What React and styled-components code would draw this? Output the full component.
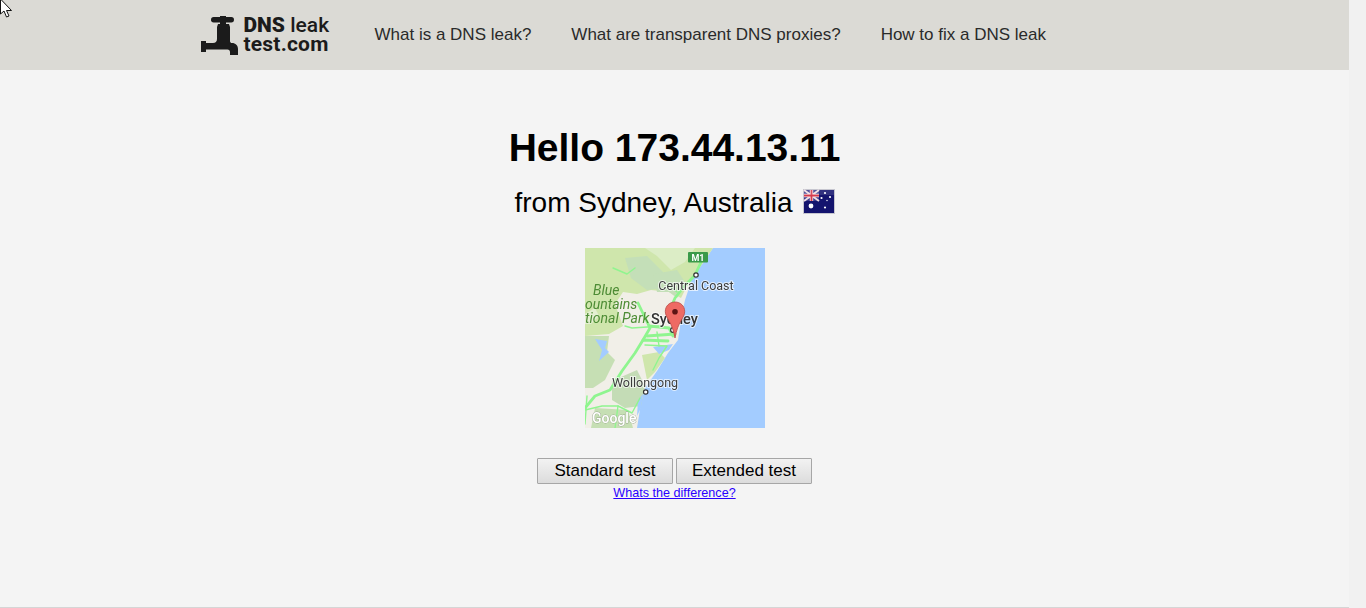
import React from "react";
import styled, { createGlobalStyle } from "styled-components";

const GlobalStyle = createGlobalStyle`
  html, body {
    margin: 0;
    height: 100%;
    overflow: hidden;
  }
  body {
    background: #f1f1f1;
    font-family: "Liberation Sans", Arial, sans-serif;
  }
`;

const Screen = styled.div`
  display: flex;
  height: 608px;
  position: relative;
`;

const Page = styled.div`
  width: 1349px;
  height: 608px;
  box-sizing: border-box;
  background: #f4f4f4;
  border-bottom: 1px solid #d5d5d5;
`;

const ScrollTrack = styled.div`
  width: 17px;
  background: #f1f1f1;
`;

const Header = styled.header`
  height: 70px;
  background: #dbdad5;
`;

const HeaderInner = styled.div`
  width: 950px;
  height: 70px;
  margin: 0 auto;
  display: flex;
  align-items: center;
`;

const Logo = styled.a`
  display: flex;
  align-items: center;
  gap: 6px;
  width: 175px;
  padding-left: 1px;
  box-sizing: border-box;
  color: #1b1b1b;
  text-decoration: none;
`;

const LogoText = styled.span`
  font-family: Roboto, "Liberation Sans", sans-serif;
  font-size: 21px;
  line-height: 19px;
  font-weight: 500;
  white-space: nowrap;
`;

const LogoStrong = styled.b`
  font-weight: ${({ $heavy }) => ($heavy ? 900 : 700)};
  letter-spacing: ${({ $heavy }) => ($heavy ? 0 : "0.2px")};
`;

const Nav = styled.nav`
  display: flex;
  gap: 40px;
`;

const NavLink = styled.a`
  font-size: 17px;
  color: #2a2a2a;
  text-decoration: none;
  white-space: nowrap;
`;

const Main = styled.main`
  display: flex;
  flex-direction: column;
  align-items: center;
`;

const Title = styled.h1`
  margin: 55px 0 0;
  font-size: 39px;
  line-height: 46px;
  font-weight: 700;
  color: #000;
`;

const Subtitle = styled.h2`
  display: flex;
  align-items: center;
  margin: 15px 0 0;
  font-size: 28px;
  line-height: 34px;
  font-weight: 400;
  color: #000;
`;

const Flag = styled.svg`
  margin: 0 0 4px 10px;
`;

const MapFrame = styled.svg`
  display: block;
  margin-top: 28px;
  filter: blur(0.3px);
`;

const Buttons = styled.div`
  display: flex;
  gap: 3px;
  margin-top: 30px;
`;

const Button = styled.button`
  width: 136px;
  height: 26px;
  padding: 0;
  box-sizing: border-box;
  border: 1px solid #a6a6a6;
  border-radius: 1px;
  background: linear-gradient(#f2f2f2, #dcdcdc);
  font-family: inherit;
  font-size: 17px;
  color: #000;
`;

const DiffLink = styled.a`
  margin-top: 2px;
  font-size: 12.6px;
  line-height: 15px;
  color: #2a00ff;
  text-decoration: underline;
`;

const Cursor = styled.svg`
  position: absolute;
  top: 0;
  left: 0;
`;

const Faucet = () => (
  <svg width="37" height="41" viewBox="0 0 37 41">
    <g fill="#1b1b1b">
      <rect x="10" y="2" width="23" height="5.500" rx="2.700" />
      <rect x="19" y="1" width="6" height="9" />
      <path d="M17 9h11l1 3v14c0 1.500 1 2 2 2 3.500 0 6 2.500 6 6v6h-8v-3c0-1.500-1-2.500-2.500-2.500H5v2.500H0V26h5v2h7c2.500 0 4-1.500 4-4V12z" />
    </g>
  </svg>
);

const AustraliaFlag = () => (
  <Flag width="32" height="26" viewBox="0 0 32 26">
    <rect x="0" y="1" width="32" height="25" fill="#c6c6cf" />
    <rect x="1" y="2" width="30" height="23" fill="#14146e" />
    <rect x="1" y="2" width="15" height="11" fill="#3b3b8c" />
    <path d="M1 2l15 11M16 2L1 13" stroke="#f0dfe4" strokeWidth="2" />
    <path d="M8.500 2v11M1 7.500h15" stroke="#f4e6ea" strokeWidth="3.400" />
    <path d="M8.500 2v11M1 7.500h15" stroke="#d43a4c" strokeWidth="1.800" />
    <rect x="1" y="2" width="30" height="5" fill="#fff" opacity="0.12" />
    <g fill="#fff">
      <circle cx="8" cy="18" r="2.400" />
      <circle cx="22" cy="5" r="1.100" />
      <circle cx="27" cy="9" r="1.100" />
      <circle cx="18.500" cy="10" r="1.100" />
      <circle cx="24" cy="12.500" r="0.700" />
      <circle cx="22" cy="19.500" r="1.100" />
    </g>
  </Flag>
);

const mainRoads = [
  "M0 160L10 148L25 142L37 123L50 105L58 92L83 93",
  "M110 27L98 40L90 50L84 64",
  "M117 12L110 27",
  "M64 78L84 80L88 88",
  "M58 92L65 80L53 55",
  "M62 88L90 86",
];

const minorRoads = [
  "M0 162L17 158L33 158L47 165L55 150",
  "M40 78L47 80L77 78",
  "M60 97L82 98L74 110L68 122",
  "M33 158L30 180",
  "M2 148L0 176",
  "M50 20L42 26L28 20",
  "M82 36L92 44",
  "M72 84L74 98",
];

const SydneyMap = () => (
  <MapFrame width="180" height="180" viewBox="0 0 180 180">
    <rect width="180" height="180" fill="#a3ccff" />
    <path
      d="M128 0L118 15L108 28L104 40L100 52L97 66L95 79L93 92L83 105L72 123L60 140L56 155L52 180H0V0Z"
      fill="#f1efe8"
    />
    <path d="M0 0H128L118 15L104 34L96 50L84 44L66 42L52 46L38 44L30 56L38 78L24 86L0 88Z" fill="#cfe6ac" />
    <path d="M60 0H110L100 14L86 22L72 8Z" fill="#dcedc6" />
    <path d="M40 10L62 8L78 24L80 40L62 42L46 30Z" fill="#c4dfb8" />
    <path d="M68 26L92 22L100 34L92 50L84 44L72 44Z" fill="#c4dfb8" />
    <path d="M0 66L10 60L14 68L6 76L0 76Z" fill="#e4efd2" />
    <path d="M0 88H24L22 104L30 112L20 132L8 140L0 140Z" fill="#c6dfb4" />
    <path d="M57 107L74 104L80 110L70 124L62 132Z" fill="#cfe6ac" />
    <path d="M27 133L52 122L60 138L56 158L40 160L27 152Z" fill="#c4dcb6" />
    <path d="M10 160L43 162L48 180H6Z" fill="#c6dfb4" />
    <path d="M10 91L22 93L20 100L24 104L14 113L17 102Z" fill="#a3ccff" />
    <path d="M68 99L88 96L84 102L74 106Z" fill="#a3ccff" />
    <path d="M53 152L58 146L56 160L52 168Z" fill="#a3ccff" />
    <g fill="none" stroke="#8ff58f" strokeLinecap="round" strokeLinejoin="round">
      {mainRoads.map((d) => (
        <path key={d} d={d} strokeWidth="2.800" />
      ))}
      {minorRoads.map((d) => (
        <path key={d} d={d} strokeWidth="1.400" />
      ))}
    </g>
    <rect x="103" y="4" width="20" height="10.500" rx="1" fill="#3a9a49" />
    <text x="113" y="13" textAnchor="middle" fontSize="9" fontWeight="700" fill="#fff" fontFamily="Roboto, sans-serif">M1</text>
    <g fill="#fff" stroke="#333" strokeWidth="1.200">
      <circle cx="111" cy="27" r="2.200" />
      <circle cx="60.700" cy="144" r="2.200" />
      <circle cx="88" cy="82" r="2.400" />
    </g>
    <g fontFamily="Roboto, sans-serif" paintOrder="stroke" stroke="#ffffffaa" strokeWidth="2">
      <text x="111" y="42" textAnchor="middle" fontSize="12.500" fill="#3c3c3c">Central Coast</text>
      <text x="66" y="76" fontSize="14.500" fontWeight="500" fill="#333">Sydney</text>
      <text x="60" y="139" textAnchor="middle" fontSize="12.500" fill="#3c3c3c">Wollongong</text>
    </g>
    <g fontFamily="Roboto, sans-serif" fontStyle="italic" fontSize="14" fill="#4d8c35">
      <text x="8" y="47">Blue</text>
      <text x="0" y="61">ountains</text>
      <text x="0" y="75">tional Park</text>
    </g>
    <text x="7" y="175" fontFamily="Roboto, sans-serif" fontSize="14" fontWeight="500" fill="#fff" paintOrder="stroke" stroke="#9aa58f" strokeWidth="0.800">Google</text>
    <path d="M90 54c-5.500 0-9.700 4-9.700 9.500 0 6.500 7 10 9.700 26.500 2.700-16.500 9.700-20 9.700-26.500C99.700 58 95.500 54 90 54z" fill="#ee6a63" stroke="#b84a45" strokeWidth="0.800" />
    <circle cx="90" cy="63.700" r="2.800" fill="#5c1414" />
  </MapFrame>
);

const App = () => (
  <Screen>
    <GlobalStyle />
    <Page>
      <Header>
        <HeaderInner>
          <Logo href="#">
            <Faucet />
            <LogoText>
              <LogoStrong $heavy>DNS</LogoStrong> leak
              <br />
              <LogoStrong>test.com</LogoStrong>
            </LogoText>
          </Logo>
          <Nav>
            <NavLink href="#">What is a DNS leak?</NavLink>
            <NavLink href="#">What are transparent DNS proxies?</NavLink>
            <NavLink href="#">How to fix a DNS leak</NavLink>
          </Nav>
        </HeaderInner>
      </Header>
      <Main>
        <Title>Hello 173.44.13.11</Title>
        <Subtitle>
          from Sydney, Australia
          <AustraliaFlag />
        </Subtitle>
        <SydneyMap />
        <Buttons>
          <Button>Standard test</Button>
          <Button>Extended test</Button>
        </Buttons>
        <DiffLink href="#">Whats the difference?</DiffLink>
      </Main>
    </Page>
    <ScrollTrack />
    <Cursor width="14" height="22" viewBox="0 0 14 22">
      <path d="M0.500-1L0.500 14L4 11L6.500 17L9 16L6.500 10.500L11.500 10.500Z" fill="#fff" stroke="#111" strokeWidth="1" />
    </Cursor>
  </Screen>
);

export default App;
